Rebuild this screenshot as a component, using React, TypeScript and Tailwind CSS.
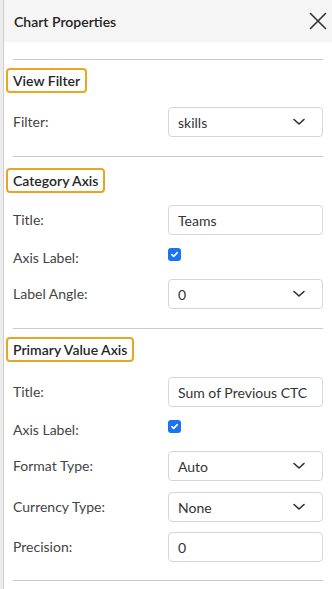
import React from "react";

const font = { fontFamily: "Lato, 'Noto Sans', sans-serif" };

function Chevron() {
  return (
    <svg width="14" height="8" viewBox="0 0 14 8" className="shrink-0">
      <path d="M2 1.5 L7 6 L12 1.5" fill="none" stroke="#2b2b2b" strokeWidth="1.6" strokeLinecap="round" strokeLinejoin="round" />
    </svg>
  );
}

function Heading({ children, className = "" }: { children: React.ReactNode; className?: string }) {
  return (
    <div className={"-ml-[7px] flex " + className}>
      <div className="flex h-[25px] items-center rounded-[4px] border-2 border-[#e9a623] px-[5px] text-[14px] font-semibold text-[#262626]">
        {children}
      </div>
    </div>
  );
}

function Label({ children }: { children: React.ReactNode }) {
  return <div className="w-[155px] shrink-0 text-[14px] leading-[20px] text-[#444]">{children}</div>;
}

function SelectRow({ label, value, className = "" }: { label: string; value: string; className?: string }) {
  return (
    <div className={"flex items-center " + className}>
      <Label>{label}</Label>
      <div className="flex h-[30px] w-[155px] items-center justify-between rounded-[4px] border border-[#d6d6d6] pl-[9px] pr-[16px] text-[14px] text-[#333]">
        <span>{value}</span>
        <Chevron />
      </div>
    </div>
  );
}

function InputRow({ label, value, className = "" }: { label: string; value: string; className?: string }) {
  return (
    <div className={"flex items-center " + className}>
      <Label>{label}</Label>
      <div className="flex h-[30px] w-[155px] items-center overflow-hidden whitespace-nowrap rounded-[4px] border border-[#d6d6d6] pl-[9px] text-[14px] text-[#333]">
        {value}
      </div>
    </div>
  );
}

function CheckRow({ label, className = "" }: { label: string; className?: string }) {
  return (
    <div className={"flex items-start " + className}>
      <Label>{label}</Label>
      <div className="flex h-[13px] w-[13px] items-center justify-center rounded-[3px] bg-[#1a73f0]">
        <svg width="9" height="9" viewBox="0 0 9 9">
          <path d="M1.8 4.6 L3.7 6.4 L7.3 2.6" fill="none" stroke="#fff" strokeWidth="1.6" strokeLinecap="round" strokeLinejoin="round" />
        </svg>
      </div>
    </div>
  );
}

function Rule({ className = "" }: { className?: string }) {
  return <div className={"h-px bg-[#cccccc] " + className} />;
}

export default function App() {
  return (
    <div className="flex h-[589px] w-[332px] overflow-hidden bg-white" style={font}>
      <div className="w-[4px] shrink-0 border-r border-[#cfcfcf] bg-[#ececec]" />
      <div className="flex flex-1 flex-col bg-white">
        <div className="flex h-[42px] items-center justify-between bg-[#f5f5f5] pl-[10px] pr-[5px]">
          <span className="text-[14px] font-semibold text-[#222]">Chart Properties</span>
          <svg width="18" height="18" viewBox="0 0 18 18">
            <path d="M1.5 1.5 L16.5 16.5 M16.5 1.5 L1.5 16.5" stroke="#333" strokeWidth="1.6" strokeLinecap="round" />
          </svg>
        </div>
        <div className="flex flex-col px-[9px]">
          <Rule className="mt-[17px]" />
          <Heading className="mt-[8px]">View Filter</Heading>
          <SelectRow label="Filter:" value="skills" className="mt-[14px]" />
          <Rule className="mt-[19px]" />
          <Heading className="mt-[11px]">Category Axis</Heading>
          <InputRow label="Title:" value="Teams" className="mt-[12px]" />
          <CheckRow label="Axis Label:" className="mt-[13px]" />
          <SelectRow label="Label Angle:" value="0" className="mt-[11px]" />
          <Rule className="mt-[19px]" />
          <Heading className="mt-[8px]">Primary Value Axis</Heading>
          <InputRow label="Title:" value="Sum of Previous CTC" className="mt-[15px]" />
          <CheckRow label="Axis Label:" className="mt-[13px]" />
          <SelectRow label="Format Type:" value="Auto" className="mt-[11px]" />
          <SelectRow label="Currency Type:" value="None" className="mt-[11px]" />
          <InputRow label="Precision:" value="0" className="mt-[10px]" />
          <Rule className="mt-[18px]" />
        </div>
      </div>
    </div>
  );
}
